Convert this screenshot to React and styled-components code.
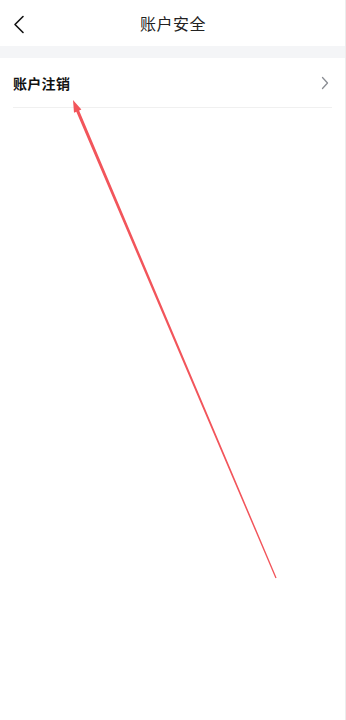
import React from 'react';
import styled, { createGlobalStyle } from 'styled-components';

const GlobalStyle = createGlobalStyle`
  html, body {
    margin: 0;
    padding: 0;
    background: #fff;
  }
  body {
    font-family: "Noto Sans CJK SC", "Noto Sans", sans-serif;
  }
`;

function BackIcon() {
  return (
    <svg width="12" height="20" viewBox="0 0 12 20">
      <path d="M10 1.5 L2 9.5 L10 17.5" fill="none" stroke="#111" strokeWidth="1.6" strokeLinecap="round" strokeLinejoin="round" />
    </svg>
  );
}

function ChevronIcon() {
  return (
    <svg width="8" height="14" viewBox="0 0 8 14">
      <path d="M1.5 1.5 L6.5 7 L1.5 12.5" fill="none" stroke="#8a8d93" strokeWidth="1.3" strokeLinecap="round" strokeLinejoin="round" />
    </svg>
  );
}

function Annotation() {
  return (
    <Overlay viewBox="0 0 346 720">
      <polygon
        points="73,100 81.4,109.5 79.1,110.5 276.6,577.8 275.4,578.2 76.3,111.7 74,112.7"
        fill="#f2555b"
      />
    </Overlay>
  );
}

export default function App() {
  return (
    <Page>
      <GlobalStyle />
      <Header>
        <BackButton>
          <BackIcon />
        </BackButton>
        <Title>账户安全</Title>
      </Header>
      <Band />
      <List>
        <Row>
          <RowLabel>账户注销</RowLabel>
          <ChevronIcon />
        </Row>
      </List>
      <Annotation />
    </Page>
  );
}

const Page = styled.div`
  position: relative;
  width: 346px;
  height: 720px;
  background: #fff;
  border-right: 1px solid #ececec;
  box-sizing: border-box;
  overflow: hidden;
`;

const Header = styled.div`
  position: relative;
  height: 46px;
  display: flex;
  align-items: center;
  justify-content: center;
`;

const BackButton = styled.div`
  position: absolute;
  left: 13px;
  top: 15px;
  display: flex;
`;

const Title = styled.div`
  font-size: 16px;
  color: #222;
  letter-spacing: 0.5px;
  margin-left: 1px;
`;

const Band = styled.div`
  height: 12px;
  background: #f4f5f7;
`;

const List = styled.div`
  padding: 0 13px;
`;

const Row = styled.div`
  height: 49px;
  display: flex;
  align-items: center;
  justify-content: space-between;
  border-bottom: 1px solid #f0f0f0;
  padding-right: 3px;
`;

const RowLabel = styled.div`
  font-size: 14px;
  font-weight: 700;
  color: #111;
  letter-spacing: 0.3px;
`;

const Overlay = styled.svg`
  position: absolute;
  left: 0;
  top: 0;
  width: 346px;
  height: 720px;
  pointer-events: none;
`;
